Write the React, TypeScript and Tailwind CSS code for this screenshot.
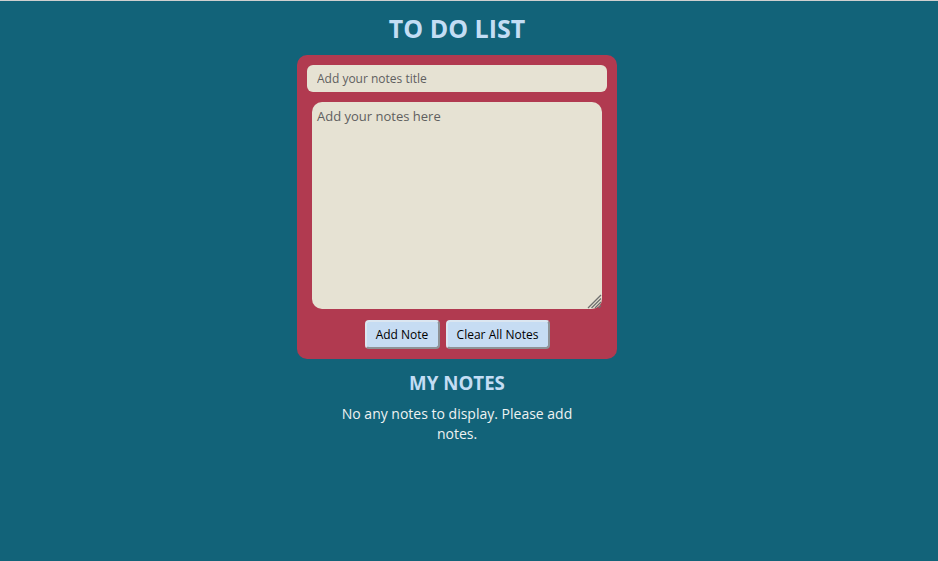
import React from "react";

export default function App() {
  return (
    <div
      className="min-h-[561px] w-full bg-[#126379] border-t border-[#cfcfcf] flex flex-col items-center pr-[24px]"
      style={{ fontFamily: '"Open Sans", sans-serif' }}
    >
      <h1 className="mt-[11px] text-[25px] leading-[32px] font-bold text-[#c3ddf4]">TO DO LIST</h1>
      <div className="mt-[11px] w-[320px] rounded-[10px] bg-[#b13a50] p-[10px] flex flex-col items-center">
        <input
          className="w-full h-[27px] rounded-[6px] bg-[#e6e2d3] px-[10px] text-[12px] text-[#333] placeholder:text-[#5f5f5f] outline-none"
          placeholder="Add your notes title"
        />
        <div className="relative mt-[10px] w-[290px] h-[207px]">
          <textarea
            className="block w-full h-full resize-none rounded-[10px] bg-[#e6e2d3] px-[5px] py-[4px] text-[13px] leading-[20px] text-[#333] placeholder:text-[#5f5f5f] outline-none"
            placeholder="Add your notes here"
          />
          <svg className="absolute right-[0px] bottom-[0px] pointer-events-none" width="16" height="16" viewBox="0 0 16 16">
            <g stroke="#6e6e6e" strokeWidth="1.2">
              <line x1="2" y1="15" x2="15" y2="2" />
              <line x1="5.5" y1="15" x2="15" y2="5.5" />
              <line x1="9" y1="15" x2="15" y2="9" />
              <line x1="12.5" y1="15" x2="15" y2="12.5" />
            </g>
          </svg>
        </div>
        <div className="mt-[11px] flex gap-[6px]">
          <button className="h-[29px] w-[75px] rounded-[4px] bg-[#c6dcf3] text-[12px] text-black border-2 border-t-[#dbe6f1] border-l-[#dbe6f1] border-b-[#8e9296] border-r-[#8e9296]">
            Add Note
          </button>
          <button className="h-[29px] w-[104px] rounded-[4px] bg-[#c6dcf3] text-[12px] text-black border-2 border-t-[#dbe6f1] border-l-[#dbe6f1] border-b-[#8e9296] border-r-[#8e9296]">
            Clear All Notes
          </button>
        </div>
      </div>
      <h2 className="mt-[12px] text-[18.72px] leading-[24px] font-bold text-[#c3ddf4]">MY NOTES</h2>
      <p className="mt-[9px] w-[250px] text-center text-[14px] leading-[20px] text-[#eef2f2]">
        No any notes to display. Please add notes.
      </p>
    </div>
  );
}
